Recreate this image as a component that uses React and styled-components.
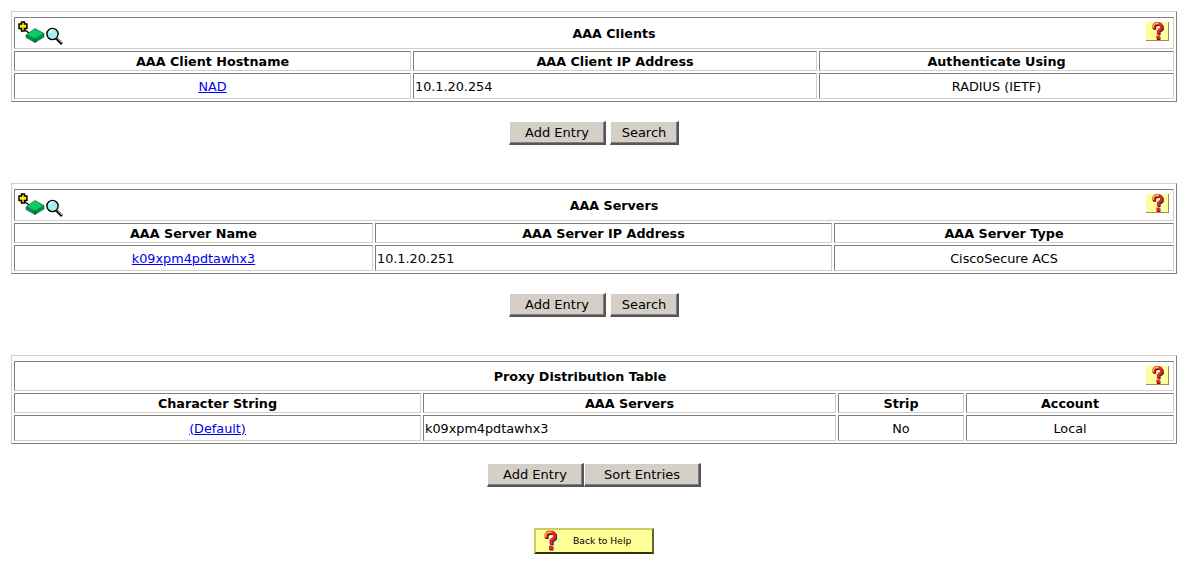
import React from "react";
import styled, { createGlobalStyle } from "styled-components";

const Global = createGlobalStyle`
  html, body { margin: 0; padding: 0; background: #fff; }
  body { font-family: "DejaVu Sans", Verdana, sans-serif; font-size: 13px; color: #000; }
`;
const Page = styled.div`
  width: 1190px; height: 570px; box-sizing: border-box; padding: 11px 13px 0 11px; overflow: hidden;
`;
const Section = styled.section`
  display: flex; flex-direction: column; align-items: center;
  margin-bottom: ${p => p.$gap}px;
`;
const Table = styled.table`
  width: 1166px; table-layout: fixed; border-collapse: separate; border-spacing: 2px;
  border: 1px solid; border-color: #d4d0c8 #808080 #808080 #d4d0c8;
  padding-top: 3px;
`;
const Cell = styled.td`
  border: 1px solid; border-color: #808080 #d4d0c8 #d4d0c8 #808080;
  padding: 0 1px; font-size: 12.8px; vertical-align: middle; white-space: nowrap;
  text-align: ${p => p.$align || "center"}; height: 26px; box-sizing: border-box;
`;
const TitleCell = styled(Cell)`
  height: ${p => (p.$tools ? 32 : 30)}px; font-weight: bold; font-size: 12.7px; position: relative;
  padding: 1px ${p => (p.$tools ? 0 : 28)}px 0 ${p => (p.$tools ? 40 : 0)}px;
`;
const HeadCell = styled(Cell).attrs({ as: "th" })`
  height: 20px; font-weight: bold; font-size: 12.75px;
`;
const Tools = styled.span`
  position: absolute; left: 3px; top: 3px; display: flex;
`;
const HelpIcon = styled.span`
  position: absolute; right: 4px; top: 4px; display: flex;
`;
const LinkText = styled.a`color: #0000ee; text-decoration: underline;`;
const Buttons = styled.div`
  display: flex; gap: ${p => p.$gap}px; margin-top: 19px;
`;
const Btn = styled.button`
  width: ${p => p.$w}px; height: 24px; box-sizing: border-box; padding: 0 0 1px;
  background: #d4d0c8; font-family: inherit; font-size: 13px; color: #000;
  border: 0; border-right: 2px solid #555; border-bottom: 2px solid #555;
  border-top: 1px solid #fff; border-left: 1px solid #fff;
  box-shadow: inset -1px -1px 0 #808080;
`;
const Back = styled.button`
  display: flex; align-items: center; position: relative;
  width: 120px; height: 26px; box-sizing: border-box; margin-top: 41px; padding: 0 0 2px 37px;
  background: #ffff99; font-family: inherit; font-size: 9.2px; color: #000;
  border: 2px solid; border-color: #cccc66 #666633 #333300 #cccc66;
`;
const BackMark = styled.span`
  position: absolute; left: 7px; top: 0; display: flex;
`;

const MarkShape = () => (
  <>
    <path d="M3 7.5V4L5 1.8H9.5L11.5 4V7L8 10V13.5" fill="none" stroke="#3b1a66" strokeWidth="3.4" transform="translate(1 1)" />
    <rect x="6.5" y="16" width="4" height="4" fill="#3b1a66" />
    <path d="M3 7.5V4L5 1.8H9.5L11.5 4V7L8 10V13.5" fill="none" stroke="#e8261c" strokeWidth="3" />
    <path d="M2.6 6.5V4L5 1.8H8.5" fill="none" stroke="#ffcc33" strokeWidth="1.2" />
    <rect x="6" y="15" width="4" height="4" fill="#e8261c" />
  </>
);

const Mark = () => (
  <svg width="14" height="21" viewBox="0 0 14 20"><MarkShape /></svg>
);

const Help = () => (
  <HelpIcon>
    <svg width="23" height="19" viewBox="0 0 23 19">
      <rect width="23" height="19" fill="#a58a4a" />
      <rect width="22" height="18" fill="#ffff99" />
      <g transform="translate(5 0) scale(0.9)"><MarkShape /></g>
    </svg>
  </HelpIcon>
);

const ToolIcons = () => (
  <Tools>
    <svg width="46" height="24" viewBox="0 0 46 24">
      <path d="M3.5 1h3v2h2.4v4.5H6.5V10h-3V7.5H1V3h2.5z" fill="#ffee00" stroke="#000" strokeWidth="1.5" />
      <path d="M7 9l4 3" stroke="#000" strokeWidth="1.4" />
      <path d="M8 14l9-6.5 9 5v3.5l-9 5.5-9-5z" fill="#008f48" stroke="#00602f" strokeWidth=".6" />
      <path d="M9 13.5l8-5.5 8 4.5-8 5z" fill="#10c868" />
      <path d="M17 18v3.5" stroke="#004020" strokeWidth="1" />
      <circle cx="34.5" cy="13" r="5.6" fill="#a8ecec" stroke="#000" strokeWidth="1.4" />
      <path d="M31.5 11.5a3.5 3.5 0 0 1 3-2.2" fill="none" stroke="#fff" strokeWidth="1.4" />
      <path d="M38.5 17.5l5.5 5.5" stroke="#000" strokeWidth="2.6" />
      <path d="M39 17.2l5 5" stroke="#d8d0a0" strokeWidth="1" />
    </svg>
  </Tools>
);

const Block = ({ title, tools, cols, heads, row, buttons, btnGap, gap }) => (
  <Section $gap={gap}>
    <Table>
      <colgroup>{cols.map((c, i) => <col key={i} width={c} />)}</colgroup>
      <tbody>
        <tr>
          <TitleCell colSpan={cols.length} $tools={tools}>
            {tools && <ToolIcons />}
            {title}
            <Help />
          </TitleCell>
        </tr>
        <tr>{heads.map(h => <HeadCell key={h}>{h}</HeadCell>)}</tr>
        <tr>
          {row.map((c, i) => (
            <Cell key={i} $align={c.left ? "left" : "center"}>
              {c.link ? <LinkText href="#">{c.text}</LinkText> : c.text}
            </Cell>
          ))}
        </tr>
      </tbody>
    </Table>
    <Buttons $gap={btnGap}>
      {buttons.map(b => <Btn key={b.t} $w={b.w}>{b.t}</Btn>)}
    </Buttons>
  </Section>
);

export default function App() {
  return (
    <Page>
      <Global />
      <Block title="AAA Clients" tools gap={38}
        cols={[397, 404, 355]}
        heads={["AAA Client Hostname", "AAA Client IP Address", "Authenticate Using"]}
        row={[{ text: "NAD", link: true }, { text: "10.1.20.254", left: true }, { text: "RADIUS (IETF)" }]}
        buttons={[{ t: "Add Entry", w: 97 }, { t: "Search", w: 69 }]} btnGap={4} />
      <Block title="AAA Servers" tools gap={38}
        cols={[359, 457, 340]}
        heads={["AAA Server Name", "AAA Server IP Address", "AAA Server Type"]}
        row={[{ text: "k09xpm4pdtawhx3", link: true }, { text: "10.1.20.251", left: true }, { text: "CiscoSecure ACS" }]}
        buttons={[{ t: "Add Entry", w: 97 }, { t: "Search", w: 69 }]} btnGap={4} />
      <Block title="Proxy Distribution Table" gap={0}
        cols={[407, 413, 126, 208]}
        heads={["Character String", "AAA Servers", "Strip", "Account"]}
        row={[{ text: "(Default)", link: true }, { text: "k09xpm4pdtawhx3", left: true }, { text: "No" }, { text: "Local" }]}
        buttons={[{ t: "Add Entry", w: 97 }, { t: "Sort Entries", w: 117 }]} btnGap={0} />
      <Section $gap={0}>
        <Back><BackMark><Mark /></BackMark>Back to Help</Back>
      </Section>
    </Page>
  );
}
